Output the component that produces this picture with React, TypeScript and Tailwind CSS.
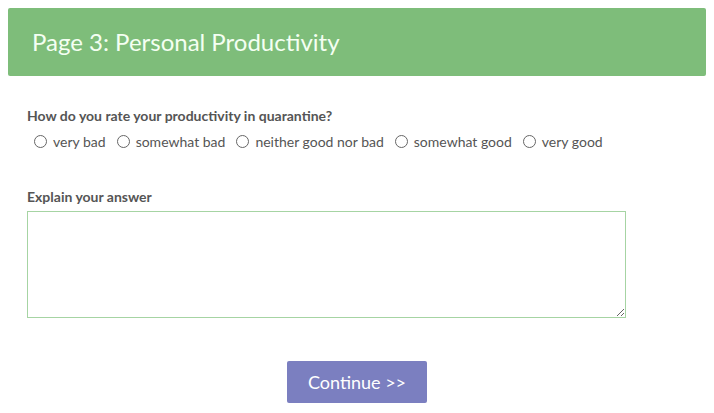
import React from "react";

const options = ["very bad", "somewhat bad", "neither good nor bad", "somewhat good", "very good"];

export default function App() {
  return (
    <div className="w-[714px] h-[413px] bg-white font-['Lato',sans-serif] text-[#555]">
      <div className="pt-2 px-2">
        <div className="h-[68px] bg-[#7ebd7a] rounded-[2px] flex items-center pl-6">
          <h1 className="text-[24px] text-[#f4fff2] leading-none">Page 3: Personal Productivity</h1>
        </div>
      </div>
      <div className="pl-[27px] pt-[31px]">
        <div className="text-[14px] font-bold leading-[17px]">How do you rate your productivity in quarantine?</div>
        <div className="flex items-center gap-[11px] pl-[7px] mt-[9px] text-[14px] leading-[17px]">
          {options.map((o) => (
            <label key={o} className="flex items-center gap-[6px]">
              <span className="w-[13px] h-[13px] rounded-full border border-[#666] bg-white" />
              <span>{o}</span>
            </label>
          ))}
        </div>
        <div className="text-[14px] font-bold leading-[17px] mt-[38px]">Explain your answer</div>
        <div className="mt-[6px] w-[599px] h-[107px] bg-[#a6d4a3] p-px">
          <textarea className="block w-full h-full border-0 outline-none resize-y bg-white" />
        </div>
      </div>
      <div className="flex justify-center mt-[43px]">
        <button className="w-[140px] h-[42px] bg-[#7b7fc0] text-white text-[18px] rounded-[2px]">Continue &gt;&gt;</button>
      </div>
    </div>
  );
}
